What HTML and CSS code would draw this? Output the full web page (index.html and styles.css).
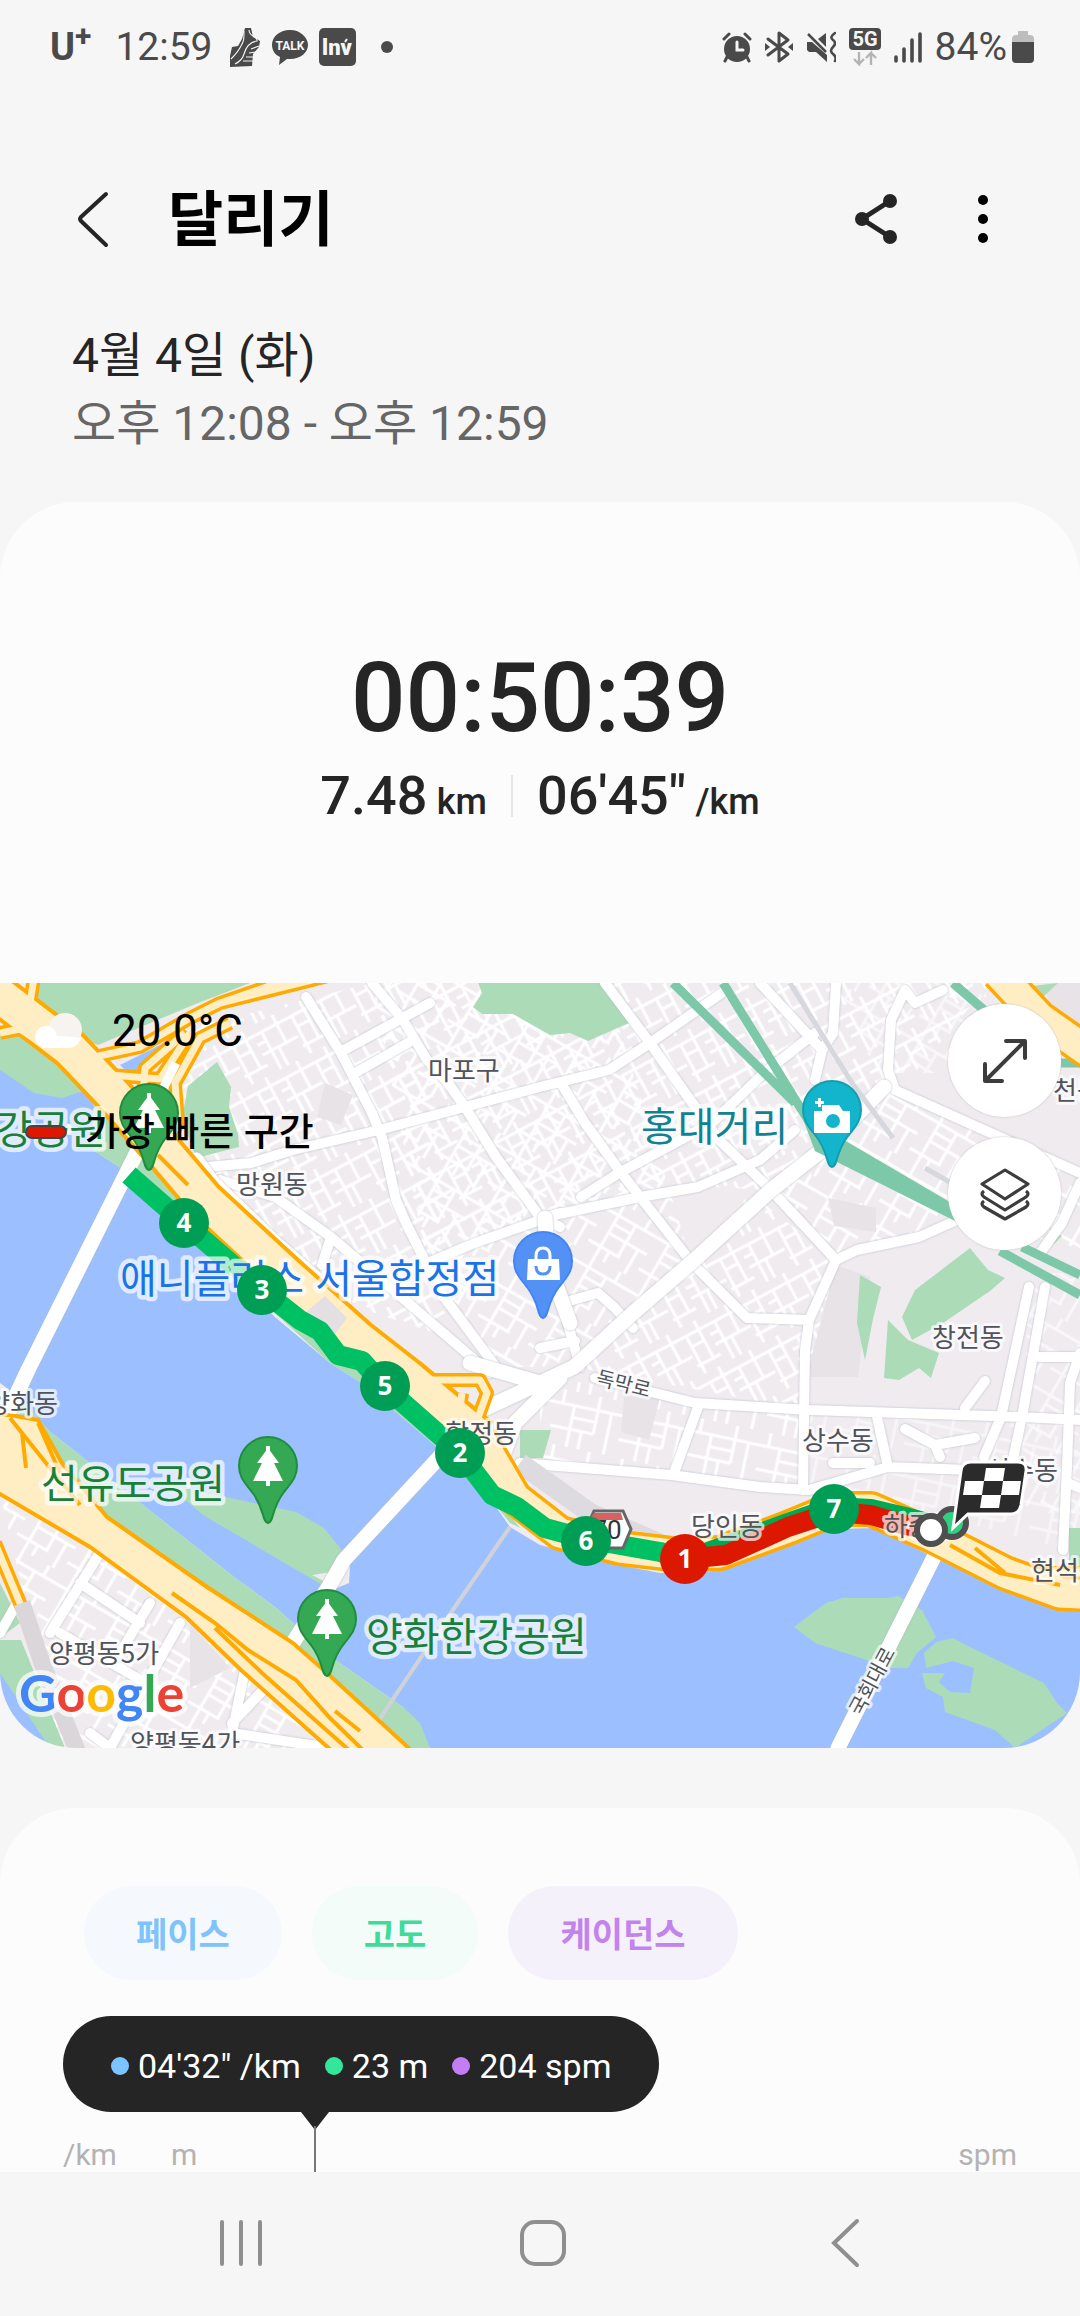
FILE: index.html
```html
<!DOCTYPE html>
<html lang="ko">
<head>
    <meta charset="UTF-8">
    <meta name="viewport" content="width=device-width, initial-scale=1.0">
    <title>달리기</title>
    <link rel="stylesheet" href="styles.css">
</head>
<body>
    <div class="status-bar">
        <div class="status-left">
            <span class="carrier">U<sup>+</sup></span>
            <span class="clock">12:59</span>
            <svg class="shoe-icon" width="32" height="40" viewBox="0 0 32 40">
                <path d="M16 1l6 0 2 9 7 4-1 6-6 7-1 12-22 1 0-11 2-9 6-1 4-7z" fill="#4a4a4a"/>
                <path d="M15 4c0 8 0 10-3 15-3 6-6 9-10 13M20 3c0 7 9 6 8 11-7 1-11 6-13 13-1 4-5 8-9 10M22 22l8-3M20 26l7-1M17 30l7 0M14 34l10 0" stroke="#f6f6f6" stroke-width="1.1" fill="none"/>
            </svg>
            <svg class="talk-icon" width="38" height="38" viewBox="0 0 38 38">
                <path d="M19 2C8 2 1 9 1 17c0 5 3 10 8 12l-1 8 8-6h3c11 0 18-7 18-14S30 2 19 2z" fill="#4a4a4a"/>
                <text x="19" y="22" class="talk-text">TALK</text>
            </svg>
            <svg class="inv-icon" width="38" height="38" viewBox="0 0 38 38">
                <rect x="0" y="0" width="37" height="38" rx="5" fill="#4a4a4a"/>
                <text x="18" y="27" class="inv-text">lnv</text>
                <path d="M26 14l2-3" stroke="#f6f6f6" stroke-width="2"/>
            </svg>
            <span class="more-dot"></span>
        </div>
        <div class="status-right">
            <svg width="30" height="32" viewBox="0 0 30 32">
                <circle cx="15" cy="18" r="13" fill="#4a4a4a"/>
                <path d="M2 8l5-5M28 8l-5-5M5 26l-2 4M25 26l2 4" stroke="#4a4a4a" stroke-width="3" stroke-linecap="round"/>
                <path d="M15 11v8h6" stroke="#f6f6f6" stroke-width="3" fill="none" stroke-linecap="round"/>
            </svg>
            <svg width="28" height="34" viewBox="0 0 28 34">
                <path d="M3 9l20 15-9 7V3l9 7L3 25" stroke="#4a4a4a" stroke-width="3" fill="none" stroke-linecap="round" stroke-linejoin="round"/>
                <path d="M0 13v8l5-4zM28 13v8l-5-4z" fill="#4a4a4a"/>
            </svg>
            <svg width="30" height="32" viewBox="0 0 30 32">
                <path d="M1 11h5l15 13v7L10 21H3l-2-2zM12 8l8-6v14z" fill="#4a4a4a"/>
                <path d="M2 3l18 18" stroke="#4a4a4a" stroke-width="2.5"/>
                <path d="M29 2q-6 4-2 7t0 7 0 7 2 7" stroke="#4a4a4a" stroke-width="2.6" fill="none" stroke-linecap="round"/>
            </svg>
            <svg width="32" height="38" viewBox="0 0 32 38">
                <rect width="32" height="22" rx="4" fill="#4a4a4a"/>
                <text x="16" y="18" class="net-text">5G</text>
                <path d="M10 24v12l-5-5m5 5l5-5M22 37V25l-5 5m5-5l5 5" stroke="#b3b3b3" stroke-width="2.4" fill="none"/>
            </svg>
            <svg width="28" height="32" viewBox="0 0 28 32">
                <path d="M2 26v4M10 18v12M18 9v21M26 3v27" stroke="#4a4a4a" stroke-width="3.6" stroke-linecap="round"/>
            </svg>
            <span class="battery-text">84%</span>
            <svg width="22" height="34" viewBox="0 0 22 34">
                <path d="M6 1h10v4h2q4 0 4 4v4H0V9q0-4 4-4h2z" fill="#bdbdbd"/>
                <path d="M0 12h22v17q0 4-4 4H4q-4 0-4-4z" fill="#4a4a4a"/>
            </svg>
        </div>
    </div>

    <header class="app-header">
        <button class="icon-btn" aria-label="뒤로">
            <svg width="34" height="58" viewBox="0 0 34 58"><path d="M30 4L5 27q-2 2 0 4l25 24" stroke="#252525" stroke-width="4" fill="none" stroke-linecap="round"/></svg>
        </button>
        <h1>달리기</h1>
        <button class="icon-btn share-btn" aria-label="공유">
            <svg width="44" height="50" viewBox="0 0 44 50">
                <path d="M36 7L8 25l28 18" stroke="#252525" stroke-width="5" fill="none"/>
                <circle cx="36" cy="7" r="7" fill="#252525"/><circle cx="8" cy="25" r="7" fill="#252525"/><circle cx="36" cy="43" r="7" fill="#252525"/>
            </svg>
        </button>
        <button class="icon-btn" aria-label="더보기">
            <svg width="10" height="50" viewBox="0 0 10 50"><circle cx="5" cy="6" r="5"/><circle cx="5" cy="25" r="5"/><circle cx="5" cy="44" r="5"/></svg>
        </button>
    </header>

    <div class="date-block">
        <p class="date">4월 4일 (화)</p>
        <p class="time-range">오후 12:08 - 오후 12:59</p>
    </div>

    <main>
        <section class="card summary-card">
            <div class="summary">
                <div class="duration">00:50:39</div>
                <div class="stats">
                    <span class="stat">7.48 <small>km</small></span>
                    <span class="divider"></span>
                    <span class="stat">06'45" <small>/km</small></span>
                </div>
            </div>

            <div class="map">
                <svg class="map-canvas" viewBox="0 0 1080 765">
                    <defs>
                        <pattern id="grid1" width="66" height="52" patternUnits="userSpaceOnUse" patternTransform="rotate(-28)">
                            <path d="M0 10H66M0 31H40M40 42H66M10 10V52M27 0V31M44 10V52M58 0V42M18 31V52M0 20H10M44 22H58" class="street"/>
                        </pattern>
                        <pattern id="grid2" width="58" height="60" patternUnits="userSpaceOnUse" patternTransform="rotate(30)">
                            <path d="M0 12H58M14 32H58M0 48H36M14 0V60M34 12V48M48 32V60M24 48V60M44 0V12M14 22H34" class="street"/>
                        </pattern>
                        <pattern id="grid3" width="70" height="56" patternUnits="userSpaceOnUse" patternTransform="rotate(12)">
                            <path d="M0 14H70M0 38H44M20 14V56M44 0V38M58 14V56M32 38V56M8 0V14M20 26H44" class="street"/>
                        </pattern>
                        <path id="pin" d="M0 0C-6-1-3-14-16-31-26-43-29-48-29-57A29 29 0 0 1 29-57C29-48 26-43 16-31 3-14 6-1 0 0Z"/>
                        <g id="tree"><path d="M0-75l11 15h-5l9 18H-15l9-18h-5z"/><path d="M-2-77h4v40h-4z"/></g>
                    </defs>
                    <rect width="1080" height="765" fill="#efebef"/>
                    <path d="M170 50L372 0 427 77 448 354 344 320 196 177z" fill="url(#grid1)"/>
                    <path d="M372 0H605L692 280 574 384 496 384 427 280z" fill="url(#grid2)"/>
                    <path d="M372 0H590L640 214 427 274z" fill="url(#grid1)"/>
                    <path d="M605 0H990L900 107 771 207 640 200z" fill="url(#grid1)"/>
                    <path d="M771 207L884 104 1080 190V265L957 237 836 277z" fill="url(#grid2)"/>
                    <path d="M691 280L750 210 836 277 805 427 574 384z" fill="url(#grid1)"/>
                    <path d="M540 394L805 427 803 507 540 482z" fill="url(#grid3)"/>
                    <path d="M805 427H1080V570L930 530 803 507z" fill="url(#grid3)" opacity=".5"/>
                    <path d="M1029 290h51v240h-60zM836 0h150v90h-110z" fill="url(#grid2)" opacity=".6"/>
                    <path d="M0 510L90 564 186 634 330 765H60z" fill="url(#grid2)"/>

                    <!-- campuses and plain blocks -->
                    <path d="M836 282l34 12-12 100h-52zM828 215l48 10v24l-42-6zM625 405l36 6-12 46-28-8zM325 100l28 12-12 30-24-8zM190 640l40 45-40 20zM1045 0h35v50l-30-20z" fill="#e7e3e7"/>

                    <!-- river -->
                    <path class="water" d="M0 80L34 104 62 112 93 100V167L124 187 227 287 275 334 330 380 362 400 444 470 489 514 510 544 540 562 609 580 660 590 709 589 753 574 809 547 874 545 919 567 1005 607 1057 624 1080 626V765H430L403 724 331 674 275 624 234 594 48 447 20 415 0 400zM0 680v85h50z"/>

                    <!-- parks -->
                    <g class="park">
                        <path d="M34 0H250L193 22 98 62 85 57 32 12zM0 53L20 48 90 100 86 107 62 115 34 110 0 87z"/>
                        <path d="M93 115L160 185 245 275 330 355 390 410 470 480 520 545 510 540 489 514 444 470 362 400 330 380 227 287 124 187 93 167z"/>
                        <path d="M188 103l29-24 14 25-2 20 9 27 1 13-43 11-14-40z"/>
                        <path d="M478 0L482 10 473 24 482 31H513L550 52 570 50 588 58 629 40 605 0z"/>
                        <path d="M970 265L988 287 1005 295 990 308 943 340 912 357 902 334 915 307zM888 337l20 20 31 13-8 25-12-10-20 12-15-2zM860 292l21 12-8 32-8 41-8-37zM1033 3l25-3-18 17zM520 447h31l-8 28h-23zM1069 545h11v50l-11-6zM1050 245l12 8-8 8z"/>
                        <path d="M20 415L48 447 234 594 275 624 331 674 403 724 420 740 430 765H350L0 480z"/>
                        <path d="M165 500L207 510 296 529 324 545 344 570 324 603 203 532z"/>
                        <path d="M794 644L826 620 843 615H888L898 613 922 627 936 654 917 670 908 685H891L815 660z"/>
                        <path d="M924 670L936 659 953 655 970 664 1044 700 1057 720 1067 730 1015 765 995 747 945 729 943 714 926 705 922 690H945L939 699 950 709 970 710 974 685 953 678 926 685z"/>
                        <path d="M0 600L20 640 0 655zM0 657H21L65 765H50L0 690z"/>
                    </g>
                    <path d="M344 570l6 15-1 15-12 5-25-13 20-3z" fill="#efebef"/>
                    <path d="M120 82l50-25-8 22-30 15z" class="water"/>

                    <!-- main streets -->
                    <g class="road-case">
                        <path d="M372 0L403 37 427 77 448 100 465 124 496 174 540 234 560 244M306 14L341 70 372 130 382 154 396 217 406 240 441 310 496 384M207 192V184L251 180 293 167 379 147 465 124 540 104 609 87 650 60 726 7"/>
                        <path d="M344 67L430 20M355 90L413 57M605 0L650 60 688 114 719 157 771 207 836 277 809 337 805 367 803 507M540 235L640 214 698 204 760 177 795 147M561 100L585 140 619 187 692 280 747 335 809 337"/>
                        <path d="M581 214L619 190 712 140 764 90 815 50M760 0L822 67 815 97M836 0L833 50 822 67M905 7L891 37 888 87 895 107 1080 190M905 7l10 13 28-13M836 277L857 267 919 254 957 237"/>
                        <path d="M595 395L695 420 809 427 1022 434 1080 437M520 480L671 492 760 504 809 507 888 484 970 487M698 424L674 490M877 434L888 484M1029 304L1001 434 984 474M1045 304L1022 434 1010 490M1070 400L1067 484 1063 567M1080 370L1070 400M1039 374H1080M833 480H870M905 446L935 462 940 474M935 462L975 455M965 425L985 398"/>
                        <path d="M220 197L275 214 331 254 448 354 490 390M322 282L331 254M427 280L475 260 560 230M562 320L598 310 615 325 633 345M562 320L580 384M540 365L575 358M1068 500L1080 505M1080 200L1062 240 1040 270"/>
                        <path d="M103 565L50 650M80 600L140 640M60 650L180 720M150 620L120 670M180 640L110 765M245 687L232 750 330 765M232 740L270 700M90 750L110 765M0 650L20 615"/>
                    </g>
                    <g class="road-main">
                        <path d="M884 104L826 164 771 207 691 280 633 330 574 384 540 400 482 427 434 480 344 577 331 600 280 680M545 235L548 280 570 340M470 380L540 400M500 480L515 440 560 395M138 167L28 387 0 447M196 177L213 200 275 260 344 320M934 574L838 765M173 95L155 135"/>
                    </g>
                    <path d="M510 544L448 634 379 737" stroke="#d0d2d8" stroke-width="4" fill="none"/>
                    <path d="M790 0L852 100 893 155M925 185L960 205" stroke="#d6d8de" stroke-width="5" fill="none"/>
                    <path d="M520 480L590 530 670 565" stroke="#dedbe0" stroke-width="20" fill="none"/>

                    <!-- rail corridor -->
                    <path d="M673 0L795 120M723 0L808 137M953 0L984 27M1057 80H1080M1000 268L1080 312M1022 264L1080 292" class="rail"/>
                    <path d="M795 115L815 140 960 225 975 248 815 168z" fill="#7cc8a8"/>

                    <!-- expressways, casing first -->
                    <g class="hwy-case">
                        <path class="w-l" d="M-10 5L70 66 110 108 165 170 205 217 284 290 358 356 408 395 480 455"/>
                        <path class="w-m" d="M480 455L515 515 560 550 620 565 680 572 720 570 788 545 834 526 871 526 932 553 1005 590 1060 610 1100 612"/>
                        <path class="w-s" d="M905 530L960 555 1029 590 1090 590"/>
                        <path class="w-s" d="M90 75L140 64 190 35 220 20 290 -4M220 20L340 -10M110 92L160 96 190 50M142 130L145 85 185 50M165 165L178 140 175 100 200 55 230 40M0 50L20 46 60 72M34 -5L30 20"/>
                        <path class="w-s" d="M420 397H480L487 410 478 435 460 425 462 410M-5 560L22 625M0 440L30 480"/>
                        <path class="w-m" d="M998 -10L1040 35 1090 70"/>
                    </g>
                    <g class="hwy">
                        <path class="w-l" d="M-10 5L70 66 110 108 165 170 205 217 284 290 358 356 408 395 480 455"/>
                        <path class="w-m" d="M480 455L515 515 560 550 620 565 680 572 720 570 788 545 834 526 871 526 932 553 1005 590 1060 610 1100 612"/>
                        <path class="w-s" d="M905 530L960 555 1029 590 1090 590"/>
                        <path class="w-s" d="M90 75L140 64 190 35 220 20 290 -4M220 20L340 -10M110 92L160 96 190 50M142 130L145 85 185 50M165 165L178 140 175 100 200 55 230 40M0 50L20 46 60 72M34 -5L30 20"/>
                        <path class="w-s" d="M420 397H480L487 410 478 435 460 425 462 410M-5 560L22 625M0 440L30 480"/>
                        <path class="w-m" d="M998 -10L1040 35 1090 70"/>
                    </g>
                    <path class="hwy-area" d="M-5 432L10 432 38 437 62 480 107 534 207 604 293 660 327 690 412 768H332L241 687 186 634 90 564 -5 508z"/>
                    <path d="M10 435L50 485 80 522M38 440L60 490M22 450L26 485M172 610L215 640 248 667 296 697 330 735 366 770M215 645L262 690 350 768M335 728L360 748M158 172L188 202M950 562L1000 590 1060 602M975 565L1005 590" stroke="#ffaa00" stroke-width="4" fill="none"/>
                    <path d="M22 620L42 680 78 770" stroke="#dad6da" stroke-width="17" fill="none"/>
                    <path d="M305 330l20-17 22 22-15 20z" fill="#e4dfe3"/>
                    <path d="M176 80L158 116" stroke="#fff" stroke-width="9"/>

                    <!-- recorded route -->
                    <path class="route" d="M129 192L184 240 262 307 300 337 320 348 338 372 362 378 385 404 460 470 492 512 517 524 545 545 586 556 660 569 685 576"/>
                    <path class="route thin" d="M700 572L788 540 834 524 871 526 905 534 945 545"/>
                    <path class="route fast" d="M685 576L726 572 788 544 834 529 871 532 905 542 932 547"/>

                    <path d="M594 528h29l8 18-8 19h-29l-8-19z" fill="#fff" stroke="#666" stroke-width="3"/>
                    <path d="M594 530h27l2 7h-34z" fill="#d96060"/>
                    <text x="607" y="556" text-anchor="middle" class="shield">70</text>

                    <g class="place">
                        <text x="428" y="97">마포구</text>
                        <text x="236" y="211">망원동</text>
                        <text x="1053" y="117">천동</text>
                        <text x="932" y="364">창전동</text>
                        <text x="58" y="430" text-anchor="end">양화동</text>
                        <text x="517" y="460" text-anchor="end">합정동</text>
                        <text x="49" y="680">양평동5가</text>
                        <text x="130" y="770">양평동4가</text>
                        <text x="802" y="467">상수동</text>
                        <text x="691" y="553">당인동</text>
                        <text x="884" y="553">하중동</text>
                        <text x="1058" y="497" text-anchor="end">신수동</text>
                        <text x="1031" y="597">현석동</text>
                        <text transform="translate(595 401) rotate(14)" class="road-name">독막로</text>
                        <text transform="translate(861 734) rotate(-62)" class="road-name">국회대로</text>
                    </g>
                    <g class="poi">
                        <text x="106" y="161" text-anchor="end" class="green">강공원</text>
                        <text x="41" y="515" class="green">선유도공원</text>
                        <text x="366" y="668" class="green">양화한강공원</text>
                        <text x="641" y="158" class="teal">홍대거리</text>
                        <text x="120" y="310" class="blue">애니플러스 서울합정점</text>
                    </g>

                    <g fill="#34a853" stroke="#1e8e3e" stroke-width="2">
                        <use href="#pin" x="149" y="187"/><use href="#pin" x="268" y="540"/><use href="#pin" x="327" y="693"/>
                    </g>
                    <g fill="#fff"><use href="#tree" x="149" y="187"/><use href="#tree" x="268" y="540"/><use href="#tree" x="327" y="693"/></g>
                    <use href="#pin" x="832" y="184" fill="#12b5cb" stroke="#129eaf" stroke-width="2"/>
                    <path d="M814 128h8v-6h17l4 6h7v22h-36zM818 115h3v3h3v3h-3v3h-3v-3h-3v-3h3z" fill="#fff"/>
                    <circle cx="833" cy="138" r="7" fill="#12b5cb"/>
                    <use href="#pin" x="543" y="335" fill="#5491f5" stroke="#4285f4" stroke-width="2"/>
                    <path d="M528 276h31l1 21h-33z" fill="#fff"/>
                    <path d="M536 277v-4q0-8 7-8t7 8v4" stroke="#fff" stroke-width="3" fill="none"/>
                    <path d="M536 283q0 8 7 8t7-8" stroke="#5491f5" stroke-width="3" fill="none"/>

                    <g class="km">
                        <circle cx="184" cy="240" r="25"/><text x="184" y="249">4</text>
                        <circle cx="262" cy="307" r="25"/><text x="262" y="316">3</text>
                        <circle cx="385" cy="403" r="25"/><text x="385" y="412">5</text>
                        <circle cx="460" cy="470" r="25"/><text x="460" y="479">2</text>
                        <circle cx="586" cy="558" r="25"/><text x="586" y="567">6</text>
                        <circle cx="834" cy="526" r="25"/><text x="834" y="535">7</text>
                        <circle cx="685" cy="576" r="25" class="fastest"/><text x="685" y="585">1</text>
                    </g>
                    <circle cx="952" cy="540" r="14" fill="#2fd080" stroke="#4f4f4f" stroke-width="6"/>
                    <circle cx="931" cy="547" r="14" fill="#fff" stroke="#4f4f4f" stroke-width="6"/>
                    <path d="M971 479h47q9 0 8 9l-5 34q-2 9-10 9h-43l-15 14 8-57q1-9 10-9z" fill="#2b2b2b" stroke="#fff" stroke-width="3"/>
                    <path d="M986 485h19l-2 13h-19zM965 498h19l-2 14h-19zM1003 498h18l-2 14h-18zM982 512h19l-2 13h-19z" fill="#fff"/>

                    <text x="19" y="729" class="google"><tspan fill="#4285f4">G</tspan><tspan fill="#ea4335">o</tspan><tspan fill="#fbbc05">o</tspan><tspan fill="#4285f4">g</tspan><tspan fill="#34a853">l</tspan><tspan fill="#ea4335">e</tspan></text>
                </svg>

                <div class="weather">
                    <svg width="52" height="38" viewBox="0 0 52 38">
                        <circle cx="33" cy="18" r="17" fill="#f6f3f1"/>
                        <path d="M12 36a11 11 0 1 1 5-22q7 3 8 10 10 0 24 2-3 10-14 10z" fill="#fff"/>
                    </svg>
                    <span>20.0°C</span>
                </div>
                <div class="legend"><i></i><span>가장 빠른 구간</span></div>
                <div class="map-buttons">
                    <button aria-label="확대">
                        <svg width="48" height="48" viewBox="0 0 48 48"><path d="M5 43L43 5M25 4h19v17M4 27v17h17" stroke="#3c3c3c" stroke-width="4" fill="none" stroke-linecap="round" stroke-linejoin="round"/></svg>
                    </button>
                    <button aria-label="지도 유형">
                        <svg width="52" height="54" viewBox="0 0 52 54"><path d="M26 3l23 14-23 15L3 17zM5 24q-4 3 0 6l21 13 21-13q4-3 0-6M5 34q-4 3 0 6l21 12 21-12q4-3 0-6" stroke="#3c3c3c" stroke-width="3.2" fill="none" stroke-linejoin="round"/></svg>
                    </button>
                </div>
            </div>
        </section>

        <section class="card chart-card">
            <div class="chips">
                <button class="chip pace">페이스</button>
                <button class="chip altitude">고도</button>
                <button class="chip cadence">케이던스</button>
            </div>
            <div class="tooltip">
                <span class="value pace">04'32" /km</span>
                <span class="value altitude">23 m</span>
                <span class="value cadence">204 spm</span>
            </div>
            <div class="axis-units">
                <span>/km</span>
                <span>m</span>
                <span class="right">spm</span>
            </div>
        </section>
    </main>

    <nav class="nav-bar">
        <button aria-label="최근 앱"><svg width="46" height="50" viewBox="0 0 46 50"><path d="M4 4v42M23 4v42M42 4v42" stroke="#8f8f8f" stroke-width="4" stroke-linecap="round"/></svg></button>
        <button aria-label="홈"><svg width="50" height="50" viewBox="0 0 50 50"><rect x="4" y="4" width="42" height="42" rx="13" stroke="#8f8f8f" stroke-width="4" fill="none"/></svg></button>
        <button aria-label="뒤로"><svg width="46" height="50" viewBox="0 0 46 50"><path d="M35 3L12 25l23 22" stroke="#8f8f8f" stroke-width="4" fill="none" stroke-linecap="round"/></svg></button>
    </nav>
</body>
</html>
```

FILE: styles.css
```css
* {
    box-sizing: border-box;
}
body {
    margin: 0;
    min-height: 100vh;
    display: flex;
    flex-direction: column;
    background-color: #f6f6f6;
    color: #252525;
    font-family: Roboto, "Noto Sans CJK KR", sans-serif;
}
button {
    border: none;
    padding: 0;
    background: none;
    font-family: inherit;
    cursor: pointer;
}
svg {
    display: block;
}

/* status bar */
.status-bar {
    height: 94px;
    padding: 0 46px 0 50px;
    display: flex;
    justify-content: space-between;
    align-items: center;
    color: #4a4a4a;
    font-size: 39px;
}
.status-left,
.status-right {
    display: flex;
    align-items: center;
}
.status-left {
    gap: 10px;
}
.status-right {
    gap: 13px;
}
.carrier {
    font-size: 38px;
    font-weight: 700;
    line-height: 40px;
    margin-right: 14px;
}
.carrier sup {
    font-size: 30px;
    line-height: 0;
}
.clock {
    margin-right: 6px;
}
.more-dot {
    width: 12px;
    height: 12px;
    margin-left: 14px;
    border-radius: 50%;
    background-color: #4a4a4a;
}
.battery-text {
    margin-right: -8px;
}
.talk-text,
.inv-text,
.net-text {
    fill: #f6f6f6;
    font-weight: 700;
    text-anchor: middle;
}
.talk-text {
    font-size: 12px;
}
.inv-text {
    font-size: 22px;
    font-weight: 900;
}
.net-text {
    font-size: 20px;
}

/* header */
.app-header {
    height: 160px;
    margin-top: 45px;
    padding: 0 92px 0 76px;
    display: flex;
    align-items: center;
}
.app-header h1 {
    margin: 0 auto 0 58px;
    padding-top: 4px;
    font-size: 60px;
    line-height: 80px;
    font-weight: 700;
    color: #000;
}
.share-btn {
    margin-right: 80px;
}
.date-block {
    padding: 23px 72px 44px;
}
.date-block p {
    margin: 0;
    font-size: 48px;
    line-height: 68px;
}
.date-block .time-range {
    color: #666;
}

/* cards */
main {
    flex: 1;
    display: flex;
    flex-direction: column;
    gap: 60px;
}
.card {
    background-color: #fcfcfc;
    border-radius: 76px;
    overflow: hidden;
}
.summary {
    padding: 140px 0 150px;
    text-align: center;
}
.duration {
    font-size: 96px;
    line-height: 112px;
    font-weight: 500;
}
.stats {
    display: flex;
    justify-content: center;
    align-items: center;
    gap: 24px;
    height: 79px;
    padding-top: 4px;
}
.stat {
    font-size: 54px;
    font-weight: 500;
}
.stat small {
    font-size: 36px;
    margin-left: -4px;
}
.divider {
    width: 2px;
    height: 42px;
    background-color: #e4e4e4;
}

/* map */
.map {
    position: relative;
}
.map-canvas {
    width: 100%;
    height: auto;
}
.street {
    stroke: #fff;
    stroke-width: 3;
    fill: none;
}
.water {
    fill: #9cc0ff;
}
.park {
    fill: #acdbb7;
}
.road-case,
.road-main {
    fill: none;
    stroke: #fff;
    stroke-linejoin: round;
    stroke-linecap: round;
    filter: drop-shadow(0 0 1px #b4bac4);
}
.road-case {
    stroke-width: 10;
}
.road-main {
    stroke-width: 15;
}
.rail {
    stroke: #7cc8a8;
    stroke-width: 9;
    fill: none;
}
.hwy-case,
.hwy {
    fill: none;
    stroke-linejoin: round;
}
.hwy-case {
    stroke: #ffaa00;
}
.hwy {
    stroke: #ffeec4;
}
.hwy-case .w-l {
    stroke-width: 42;
}
.hwy-case .w-m {
    stroke-width: 36;
}
.hwy-case .w-s {
    stroke-width: 14;
}
.hwy .w-l {
    stroke-width: 34;
}
.hwy .w-m {
    stroke-width: 29;
}
.hwy .w-s {
    stroke-width: 7;
}
.hwy-area {
    fill: #ffeec4;
    stroke: #ffaa00;
    stroke-width: 4;
}
.route {
    fill: none;
    stroke: #00c064;
    stroke-width: 20;
    stroke-linejoin: round;
}
.route.thin {
    stroke: #00a854;
}
.route.fast {
    stroke: #dc1800;
}
.place,
.poi {
    font-family: "Noto Sans CJK KR", sans-serif;
    stroke: rgba(255, 255, 255, 0.7);
    stroke-linejoin: round;
    paint-order: stroke;
}
.place {
    font-size: 26px;
    fill: #50545a;
    stroke-width: 6px;
}
.road-name {
    font-size: 20px;
}
.shield {
    font-size: 26px;
    fill: #333;
}
.poi {
    font-size: 40px;
    stroke-width: 9px;
}
.poi .green {
    fill: #188038;
}
.poi .teal {
    fill: #108291;
}
.poi .blue {
    fill: #1a73e8;
}
.km circle {
    fill: #009e54;
}
.km .fastest {
    fill: #dc1800;
}
.km text {
    font-family: "Noto Sans", sans-serif;
    font-size: 26px;
    font-weight: 700;
    fill: #fff;
    text-anchor: middle;
}
.google {
    font-family: Lato, sans-serif;
    font-size: 52px;
    font-weight: 700;
    stroke: rgba(255, 255, 255, 0.7);
    stroke-width: 10px;
    stroke-linejoin: round;
    paint-order: stroke;
}
.weather,
.legend {
    position: absolute;
    display: flex;
    align-items: center;
    color: #000;
}
.weather {
    top: 22px;
    left: 32px;
    gap: 28px;
    font-size: 44px;
}
.legend {
    top: 121px;
    left: 25px;
    gap: 18px;
    font-size: 38px;
    font-weight: 500;
    line-height: 56px;
}
.legend i {
    width: 42px;
    height: 14px;
    border: 2px solid #444;
    border-radius: 7px;
    background-color: #dc1800;
}
.map-buttons {
    position: absolute;
    top: 21px;
    right: 19px;
    display: flex;
    flex-direction: column;
    gap: 20px;
}
.map-buttons button {
    width: 113px;
    height: 113px;
    display: flex;
    justify-content: center;
    align-items: center;
    border-radius: 50%;
    background-color: #fff;
    box-shadow: 0 0 2px #bbb;
}

/* chart */
.chart-card {
    flex: 1;
    padding: 78px 63px 0;
    border-radius: 76px 76px 0 0;
}
.chips {
    display: flex;
    gap: 30px;
    padding-left: 21px;
}
.chip {
    height: 94px;
    padding: 0 52px 2px;
    border-radius: 47px;
    font-size: 34px;
    font-weight: 700;
}
.chip.pace {
    color: #80c2fb;
    background-color: #f5f9fd;
}
.chip.altitude {
    color: #3ddd99;
    background-color: #f3fcf9;
}
.chip.cadence {
    color: #c283ec;
    background-color: #f5f1fb;
}
.tooltip {
    position: relative;
    width: fit-content;
    height: 96px;
    margin-top: 36px;
    padding: 4px 48px 0;
    display: flex;
    align-items: center;
    gap: 24px;
    border-radius: 48px;
    background-color: #252525;
    color: #fff;
    font-size: 34px;
}
.tooltip::before {
    content: "";
    position: absolute;
    top: 96px;
    left: 238px;
    border: 14px solid transparent;
    border-top: 18px solid #252525;
    border-bottom: none;
}
.tooltip::after {
    content: "";
    position: absolute;
    top: 110px;
    left: 251px;
    width: 2px;
    height: 50px;
    background-color: #777;
}
.value {
    display: flex;
    align-items: center;
    gap: 9px;
}
.value::before {
    content: "";
    width: 18px;
    height: 18px;
    border-radius: 50%;
}
.value.pace::before {
    background-color: #7cc4ff;
}
.value.altitude::before {
    background-color: #32e69b;
}
.value.cadence::before {
    background-color: #c57df5;
}
.axis-units {
    display: flex;
    gap: 54px;
    margin-top: 26px;
    font-size: 30px;
    line-height: 34px;
    color: #b3b3b3;
}
.axis-units .right {
    margin-left: auto;
}

/* navigation */
.nav-bar {
    height: 144px;
    padding: 0 84px 2px 90px;
    display: flex;
    background-color: #f6f6f6;
}
.nav-bar button {
    flex: 1;
    display: flex;
    justify-content: center;
    align-items: center;
}
```
